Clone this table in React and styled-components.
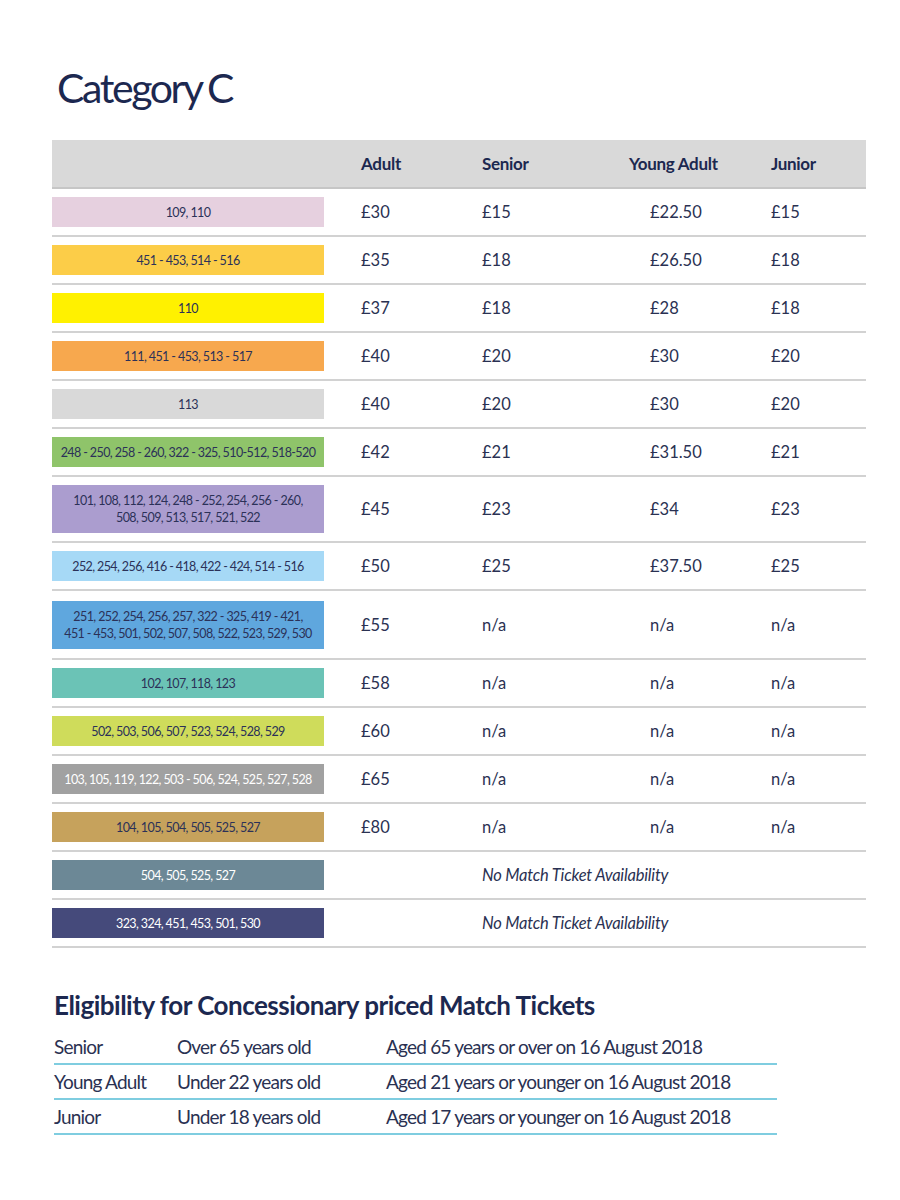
import React from 'react';
import styled, { createGlobalStyle } from 'styled-components';

const navy = '#1f2a52';

const zones = [
  { label: '109, 110', bg: '#e6d0df', prices: ['£30', '£15', '£22.50', '£15'] },
  { label: '451 - 453, 514 - 516', bg: '#fccd48', prices: ['£35', '£18', '£26.50', '£18'] },
  { label: '110', bg: '#fff100', prices: ['£37', '£18', '£28', '£18'] },
  { label: '111, 451 - 453, 513 - 517', bg: '#f7a84e', prices: ['£40', '£20', '£30', '£20'] },
  { label: '113', bg: '#d9d9d9', prices: ['£40', '£20', '£30', '£20'] },
  { label: '248 - 250, 258 - 260, 322 - 325, 510-512, 518-520', bg: '#8fc46a', prices: ['£42', '£21', '£31.50', '£21'] },
  {
    label: '101, 108, 112, 124, 248 - 252, 254, 256 - 260,\n508, 509, 513, 517, 521, 522',
    bg: '#ab9dcf',
    tall: 66,
    prices: ['£45', '£23', '£34', '£23'],
  },
  { label: '252, 254, 256, 416 - 418, 422 - 424, 514 - 516', bg: '#a6d9f6', prices: ['£50', '£25', '£37.50', '£25'] },
  {
    label: '251, 252, 254, 256, 257, 322 - 325, 419 - 421,\n451 - 453, 501, 502, 507, 508, 522, 523, 529, 530',
    bg: '#5fa7de',
    tall: 69,
    prices: ['£55', 'n/a', 'n/a', 'n/a'],
  },
  { label: '102, 107, 118, 123', bg: '#6bc3b6', prices: ['£58', 'n/a', 'n/a', 'n/a'] },
  { label: '502, 503, 506, 507, 523, 524, 528, 529', bg: '#cfdc5b', prices: ['£60', 'n/a', 'n/a', 'n/a'] },
  { label: '103, 105, 119, 122, 503 - 506, 524, 525, 527, 528', bg: '#a1a1a1', light: true, prices: ['£65', 'n/a', 'n/a', 'n/a'] },
  { label: '104, 105, 504, 505, 525, 527', bg: '#c6a25c', prices: ['£80', 'n/a', 'n/a', 'n/a'] },
  { label: '504, 505, 525, 527', bg: '#6c8896', light: true },
  { label: '323, 324, 451, 453, 501, 530', bg: '#454a7b', light: true },
];

const eligibility = [
  ['Senior', 'Over 65 years old', 'Aged 65 years or over on 16 August 2018'],
  ['Young Adult', 'Under 22 years old', 'Aged 21 years or younger on 16 August 2018'],
  ['Junior', 'Under 18 years old', 'Aged 17 years or younger on 16 August 2018'],
];

const App = () => {
  return (
    <>
      <GlobalStyle />
      <Page>
        <Title>Category C</Title>
        <PriceTable>
          <HeaderRow>
            <span />
            <HeadCell>Adult</HeadCell>
            <HeadCell>Senior</HeadCell>
            <HeadCell>Young Adult</HeadCell>
            <HeadCell>Junior</HeadCell>
          </HeaderRow>
          {zones.map((z) => (
            <Row key={z.label} $height={z.tall || 48}>
              <ZoneBar $bg={z.bg} $light={z.light} $tall={!!z.tall}>
                {z.label}
              </ZoneBar>
              {z.prices ? (
                z.prices.map((p, i) => <Price key={i}>{p}</Price>)
              ) : (
                <NoMatch>No Match Ticket Availability</NoMatch>
              )}
            </Row>
          ))}
        </PriceTable>

        <SubTitle>Eligibility for Concessionary priced Match Tickets</SubTitle>
        <EligTable>
          {eligibility.map((r) => (
            <EligRow key={r[0]}>
              <EligCell>{r[0]}</EligCell>
              <EligCell>{r[1]}</EligCell>
              <EligCell>{r[2]}</EligCell>
            </EligRow>
          ))}
        </EligTable>
      </Page>
    </>
  );
};

const GlobalStyle = createGlobalStyle`
  body {
    margin: 0;
    background: #ffffff;
    font-family: Lato, "Open Sans", sans-serif;
    color: ${navy};
  }
`;

const Page = styled.div`
  width: 900px;
  height: 1200px;
  box-sizing: border-box;
  padding: 66px 34px 0 52px;
`;

const Title = styled.h1`
  margin: 0 0 30px 5px;
  font-size: 41px;
  line-height: 44px;
  font-weight: 400;
  letter-spacing: -2.4px;
  word-spacing: -2px;
  color: #1c2850;
`;

const PriceTable = styled.div`
  width: 814px;
`;

const HeaderRow = styled.div`
  display: grid;
  grid-template-columns: 309px 121px 147px 142px 1fr;
  align-items: center;
  height: 47px;
  background: #d9d9d9;
  border-bottom: 2px solid #c6c6c6;
`;

const HeadCell = styled.div`
  font-weight: 700;
  font-size: 17px;
  letter-spacing: -0.3px;
  color: #1c2850;
`;

const Row = styled.div`
  display: grid;
  grid-template-columns: 309px 121px 168px 121px 1fr;
  align-items: center;
  height: ${(p) => p.$height - 2}px;
  border-bottom: 2px solid #d2d2d2;
`;

const ZoneBar = styled.div`
  width: 272px;
  height: ${(p) => (p.$tall ? 48 : 30)}px;
  display: flex;
  align-items: center;
  justify-content: center;
  text-align: center;
  white-space: pre-line;
  background: ${(p) => p.$bg};
  color: ${(p) => (p.$light ? '#ffffff' : '#2b3158')};
  font-size: 12.5px;
  line-height: 17px;
  letter-spacing: -0.6px;
`;

const Price = styled.div`
  font-size: 16.5px;
  font-weight: 400;
  color: #2a3152;
`;

const NoMatch = styled.div`
  grid-column: 3 / -1;
  font-style: italic;
  font-size: 16.5px;
  letter-spacing: -0.2px;
  color: #2a3152;
`;

const SubTitle = styled.h2`
  margin: 42px 0 10px 2px;
  font-size: 26px;
  line-height: 30px;
  font-weight: 700;
  letter-spacing: -0.5px;
  color: #1c2850;
`;

const EligTable = styled.div`
  width: 723px;
  margin-left: 2px;
`;

const EligRow = styled.div`
  display: grid;
  grid-template-columns: 123px 209px 1fr;
  align-items: center;
  height: 33px;
  border-bottom: 2px solid #7fcde0;
`;

const EligCell = styled.div`
  font-size: 19px;
  font-weight: 400;
  letter-spacing: -0.8px;
  color: #2a3152;
`;

export default App;
